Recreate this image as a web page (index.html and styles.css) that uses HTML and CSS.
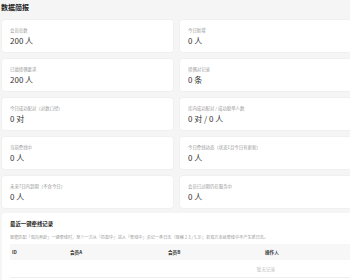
FILE: index.html
```html
<!DOCTYPE html>
<html lang="zh-CN">
<head>
  <meta charset="UTF-8">
  <meta name="viewport" content="width=device-width, initial-scale=1.0">
  <title>数据简报</title>
  <link rel="stylesheet" href="styles.css">
</head>
<body>
  <div class="page">
    <h1 class="page-title">数据简报</h1>

    <div class="stats">
      <div class="stat"><div class="stat-label">会员总数</div><div class="stat-value">200 人</div></div>
      <div class="stat"><div class="stat-label">今日新增</div><div class="stat-value">0 人</div></div>
      <div class="stat"><div class="stat-label">已填择偶要求</div><div class="stat-value">200 人</div></div>
      <div class="stat"><div class="stat-label">择偶对记录</div><div class="stat-value">0 条</div></div>
      <div class="stat"><div class="stat-label">今日成功配对（对数口径）</div><div class="stat-value">0 对</div></div>
      <div class="stat"><div class="stat-label">库内成功配对 / 成功脱单人数</div><div class="stat-value">0 对 / 0 人</div></div>
      <div class="stat"><div class="stat-label">当前牵线中</div><div class="stat-value">0 人</div></div>
      <div class="stat"><div class="stat-label">今日牵线动态（状态1且今日有更新）</div><div class="stat-value">0 人</div></div>
      <div class="stat"><div class="stat-label">未来7日内到期（不含今日）</div><div class="stat-value">0 人</div></div>
      <div class="stat"><div class="stat-label">会员已过期仍在服务中</div><div class="stat-value">0 人</div></div>
    </div>

    <div class="panel">
      <h2 class="panel-title">最近一键牵线记录</h2>
      <p class="panel-desc">智能匹配「双向奔赴」一键牵线时，至少一方从「匹配中」进入「牵线中」会记一条日志（规格 2.3 / 5.3）；若双方本就牵线中不产生新日志。</p>
      <table class="log-table">
        <thead>
          <tr>
            <th class="col-id">ID</th>
            <th class="col-a">会员A</th>
            <th class="col-b">会员B</th>
            <th class="col-op">操作人</th>
          </tr>
        </thead>
        <tbody>
          <tr><td class="empty" colspan="4">暂无记录</td></tr>
        </tbody>
      </table>
    </div>
  </div>
</body>
</html>
```

FILE: styles.css
```css
html, body {
  margin: 0;
  padding: 0;
  overflow: hidden;
}
body {
  font-family: "Noto Sans CJK SC", "Noto Sans", sans-serif;
  background-color: #f5f5f5;
  color: #333;
}
.page {
  width: 350px;
  height: 280px;
  overflow: hidden;
  padding-left: 2px;
  box-sizing: border-box;
}
.page-title {
  margin: 0;
  padding: 3px 0 0 0;
  margin-left: -1px;
  height: 17px;
  font-size: 7px;
  line-height: 9px;
  font-weight: bold;
  color: #222;
}
.stats {
  display: grid;
  grid-template-columns: 171px 171px;
  grid-auto-rows: 32px;
  column-gap: 7px;
  row-gap: 7px;
}
.stat {
  background-color: #fff;
  border-radius: 3px;
  padding: 7px 8px 0;
  box-shadow: 0 0 0 0.5px #ececec;
}
.stat-label {
  font-size: 4.4px;
  line-height: 6px;
  color: #9a9a9a;
}
.stat-value {
  margin-top: 3px;
  font-size: 8px;
  line-height: 10px;
  color: #333;
}
.panel {
  margin-top: 5px;
  width: 600px;
  background-color: #fff;
  border-radius: 3px;
  padding: 8px 8px 0;
  height: 80px;
}
.panel-title {
  margin: 0;
  font-size: 5.4px;
  line-height: 7px;
  font-weight: bold;
  color: #222;
}
.panel-desc {
  margin: 6px 0 0;
  font-size: 4.15px;
  line-height: 6px;
  color: #999;
}
.log-table {
  margin-top: 4px;
  width: 512px;
  border-collapse: collapse;
  font-size: 4.6px;
}
.log-table th {
  background-color: #f7f7f7;
  height: 16px;
  padding: 0 2px;
  text-align: left;
  font-weight: bold;
  color: #333;
}
.col-id { width: 54px; }
.col-a { width: 94px; }
.col-b { width: 93px; }
.log-table td.empty {
  height: 15px;
  text-align: center;
  color: #bbb;
  border-bottom: 1px solid #eee;
}
```
